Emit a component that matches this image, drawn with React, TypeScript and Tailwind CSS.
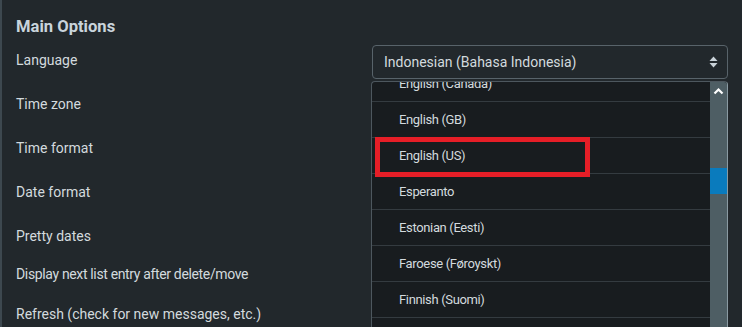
import React from 'react';

const rows = [
  { label: 'Language', h: 'h-[44px]', select: 'Indonesian (Bahasa Indonesia)' },
  { label: 'Time zone', h: 'h-[44px]', select: 'Auto' },
  { label: 'Time format', h: 'h-[44px]', select: '24h' },
  { label: 'Date format', h: 'h-[44px]', select: 'Y-m-d' },
  { label: 'Pretty dates', h: 'h-[38px]', select: null },
  { label: 'Display next list entry after delete/move', h: 'h-[40px]', select: null, tight: true },
  { label: 'Refresh (check for new messages, etc.)', h: 'h-[40px]', select: 'every 1 minute(s)' },
];

const languages = [
  'English (Canada)',
  'English (GB)',
  'English (US)',
  'Esperanto',
  'Estonian (Eesti)',
  'Faroese (Føroyskt)',
  'Finnish (Suomi)',
  'French (Français)',
];

function SortArrows() {
  return (
    <svg width="9" height="12" viewBox="0 0 9 12" className="text-[#c9d2d8]">
      <path d="M4.5 0.5 L8.5 5 H0.5 Z" fill="currentColor" />
      <path d="M4.5 11.5 L8.5 7 H0.5 Z" fill="currentColor" />
    </svg>
  );
}

export default function App() {
  return (
    <div
      className="relative h-[327px] w-[742px] overflow-hidden border-l-2 border-[#3d484f] bg-[#22282c] text-[14px] text-[#d3dade]"
      style={{ fontFamily: 'Roboto, "Liberation Sans", sans-serif' }}
    >
      <div className="pl-[14px]">
        <h2 className="mb-[1px] pt-[15px] text-[16.6px] font-bold leading-[24px] text-[#c9d4dc]">Main Options</h2>

        {rows.map((row) => (
          <div key={row.label} className={`flex items-start ${row.h}`}>
            <div className={`w-[356px] pt-[10px] leading-[20px] ${row.tight ? 'tracking-[-0.35px]' : ''}`}>{row.label}</div>
            {row.select && (
              <div className="mt-[5px] flex h-[34px] w-[356px] items-center justify-between rounded-[4px] border border-[#58636a] bg-[#22282c] pl-[11px] pr-[9px] text-[14px]">
                <span>{row.select}</span>
                <SortArrows />
              </div>
            )}
          </div>
        ))}
      </div>

      {/* open language dropdown */}
      <div className="absolute left-[369px] top-[81px] flex h-[260px] w-[357px] overflow-hidden rounded-t-[4px] border border-r-[#8a9aa2] border-[#4d575e] bg-[#181c1f]">
        <div className="flex-1 overflow-hidden">
          <div className="-mt-[16px]">
            {languages.map((lang) => (
              <div
                key={lang}
                className="flex h-[36px] items-center border-b border-[#343b40] pl-[27px] text-[13px] leading-[20px] tracking-[-0.35px] text-[#d3dade]"
              >
                {lang}
              </div>
            ))}
          </div>
        </div>
        <div className="flex w-[17px] flex-col items-center bg-[#4e5e64]">
          <svg width="11" height="8" viewBox="0 0 11 8" className="mt-[5px] text-white">
            <path d="M1.5 6.5 L5.5 2.5 L9.5 6.5" stroke="currentColor" strokeWidth="2.2" fill="none" />
          </svg>
          <div className="mt-[73px] h-[26px] w-full bg-[#0a7bbd]" />
        </div>
      </div>

      {/* highlight box */}
      <div className="absolute left-[373px] top-[137px] h-[40px] w-[215px] border-[5px] border-[#e61e27]" />
    </div>
  );
}
